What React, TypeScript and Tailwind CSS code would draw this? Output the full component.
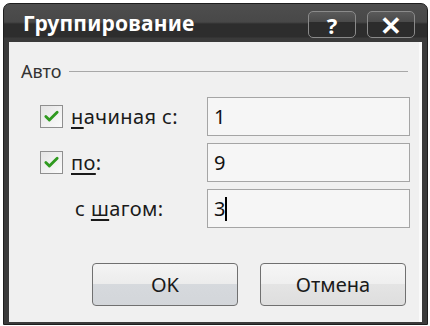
import { Check } from "lucide-react"

const font = { fontFamily: '"Noto Sans", "Open Sans", sans-serif' }

function CheckBox() {
  return (
    <div className="w-[23px] h-[23px] border border-[#8f8f8f] bg-gradient-to-br from-[#e4e4e4] to-[#fbfbfb] flex items-center justify-center">
      <Check className="w-[17px] h-[17px] text-[#2f9a1f]" strokeWidth={4} />
    </div>
  )
}

function Field({ value, caret }: { value: string; caret?: boolean }) {
  return (
    <div className="w-[203px] h-[39px] border border-[#a5a5a5] bg-[#f6f6f6] flex items-center px-[6px] text-[20px] text-[#111]">
      {value}
      {caret && <span className="w-[2px] h-[24px] bg-black" />}
    </div>
  )
}

function WinButton({ label, isDefault }: { label: string; isDefault?: boolean }) {
  return (
    <div
      className={`w-[146px] h-[43px] rounded-[4px] border border-[#707070] flex items-center justify-center text-[20px] text-[#1a1a1a] ${
        isDefault
          ? "bg-[linear-gradient(#f4f4f4_0%,#ececec_48%,#d6d9dd_50%,#d3d6da_100%)]"
          : "bg-[linear-gradient(#f6f6f6_0%,#efefef_48%,#e4e4e4_50%,#dedede_100%)]"
      }`}
    >
      {label}
    </div>
  )
}

function CaptionButton({ children }: { children: React.ReactNode }) {
  return (
    <div className="w-[48px] h-[27px] rounded-[5px] border border-[#8a8a8a] bg-[linear-gradient(#5a5a5a_0%,#4a4a4a_40%,#2c2c2c_42%,#2c2c2c_100%)] flex items-center justify-center text-white font-bold text-[22px] leading-none">
      {children}
    </div>
  )
}

export default function App() {
  return (
    <div className="w-[430px] h-[326px] bg-white pt-[3px] pl-[3px] overflow-hidden" style={font}>
      <div className="w-[425px] h-[322px] rounded-t-[7px] border border-[#1e1e1e] bg-[linear-gradient(#4e4e4e_0px,#484848_18px,#2d2d2d_20px,#2d2d2d_33px,#3a3a3a_34px,#3a3a3a_100%)] flex flex-col px-[5px] pb-[2px]">
        {/* Title bar */}
        <div className="h-[38px] flex items-center justify-between pl-[14px] pr-[7px] pt-[2px]">
          <span className="text-white font-bold text-[21px] tracking-[0.2px]">Группирование</span>
          <div className="flex gap-[11px] mt-[1px]">
            <CaptionButton>?</CaptionButton>
            <CaptionButton>
              <span className="text-[26px] font-black">✕</span>
            </CaptionButton>
          </div>
        </div>

        {/* Client area */}
        <div className="flex-1 bg-[#f0f0f0] border-r-[3px] border-[#fafafa] text-[#1a1a1a]">
          <div className="flex items-center gap-[8px] pl-[12px] pr-[11px] pt-[16px]">
            <span className="text-[18px] text-[#333]">Авто</span>
            <div className="flex-1 h-px bg-[#a8a8a8]" />
          </div>

          <div className="flex flex-col gap-[7px] mt-[12px] pl-[31px]">
            <div className="flex items-center">
              <CheckBox />
              <span className="ml-[8px] w-[136px] text-[20px] tracking-[0.4px]">
                <span className="underline underline-offset-[3px]">н</span>ачиная с:
              </span>
              <Field value="1" />
            </div>
            <div className="flex items-center">
              <CheckBox />
              <span className="ml-[8px] w-[136px] text-[20px] tracking-[0.4px]">
                <span className="underline underline-offset-[3px]">по</span>:
              </span>
              <Field value="9" />
            </div>
            <div className="flex items-center">
              <span className="ml-[35px] w-[132px] text-[20px] tracking-[0.4px]">
                с <span className="underline underline-offset-[3px]">ш</span>агом:
              </span>
              <Field value="3" caret />
            </div>
          </div>

          <div className="flex gap-[22px] pl-[83px] mt-[35px]">
            <WinButton label="OK" isDefault />
            <WinButton label="Отмена" />
          </div>
        </div>
      </div>
    </div>
  )
}
